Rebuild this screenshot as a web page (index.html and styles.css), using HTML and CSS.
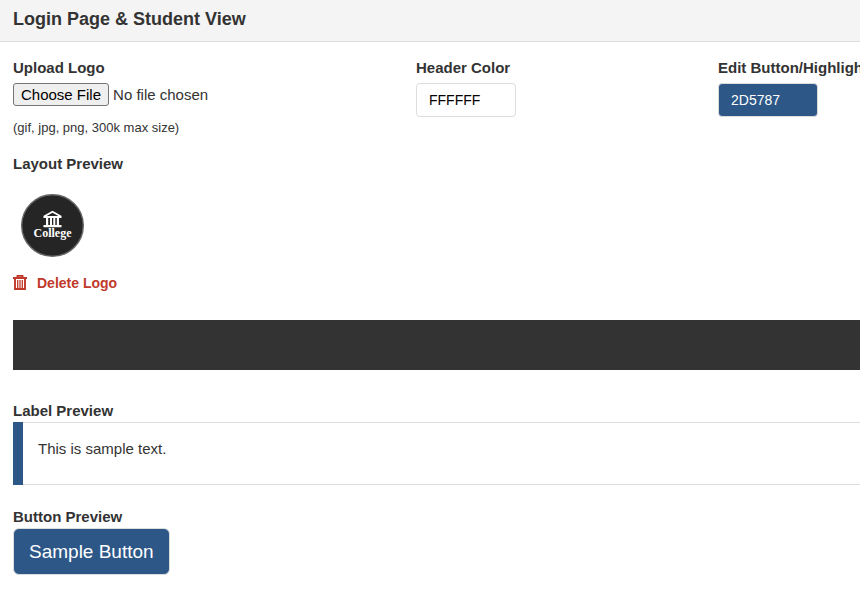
FILE: index.html
```html
<!DOCTYPE html>
<html lang="en">
<head>
<meta charset="utf-8">
<title>Login Page &amp; Student View</title>
<link rel="stylesheet" href="styles.css">
</head>
<body>
<header class="panel-heading">
  <h1 class="panel-title">Login Page &amp; Student View</h1>
</header>
<main class="panel-body">
  <form class="settings">
    <div class="field">
      <label class="label" for="logo">Upload Logo</label>
      <input class="file" type="file" id="logo" accept=".gif,.jpg,.png">
      <small class="hint">(gif, jpg, png, 300k max size)</small>
    </div>
    <div class="field">
      <label class="label" for="header-color">Header Color</label>
      <input class="color" type="text" id="header-color" value="FFFFFF">
    </div>
    <div class="field">
      <label class="label" for="button-color">Edit Button/Highlight</label>
      <input class="color color-accent" type="text" id="button-color" value="2D5787">
    </div>
  </form>

  <section class="layout-preview">
    <h2 class="label">Layout Preview</h2>
    <svg class="logo" viewBox="0 0 64 64" role="img" aria-label="College">
      <circle cx="31.500" cy="32.500" r="30.800" fill="#252525" stroke="#666" stroke-width="1.400"/>
      <path d="M23 23.500 31.500 18.800l8.500 4.700" fill="none" stroke="#fff" stroke-width="1.800"/>
      <path d="M22.500 23h18v2h-18zM25 25h2.200v7H25zM29 25h2v7h-2zM32.300 25h2v7h-2zM35.800 25H38v7h-2.200zM22.500 32h18v2.200h-18z" fill="#fff"/>
      <text class="logo-text" x="31.500" y="44" text-anchor="middle">College</text>
    </svg>
    <a class="delete" href="#">
      <svg class="trash" viewBox="0 0 14 16" aria-hidden="true">
        <path d="M0 3h14M4.500 3V.900h5V3M2 3.500v10.500h10V3.500" fill="none" stroke="#c0392b" stroke-width="1.900"/>
        <path d="M4.700 5v8M7 5v8M9.300 5v8" fill="none" stroke="#c0392b" stroke-width="1.300"/>
      </svg>
      Delete Logo
    </a>
    <div class="header-bar"></div>
  </section>

  <section class="label-preview">
    <h2 class="label">Label Preview</h2>
    <div class="callout">
      <p class="callout-text">This is sample text.</p>
    </div>
  </section>

  <section class="button-preview">
    <h2 class="label">Button Preview</h2>
    <button class="sample" type="button">Sample Button</button>
  </section>
</main>
</body>
</html>
```
FILE: styles.css
```css
* {
  box-sizing: border-box;
}

body {
  margin: 0;
  overflow-x: hidden;
  background: #fff;
  color: #333;
  font: 15px/20px "Liberation Sans", Arial, sans-serif;
}

h1, h2, p {
  margin: 0;
}

.panel-heading {
  padding: 9px 13px 12px;
  background: #f4f4f4;
  border-bottom: 1px solid #ddd;
}

.panel-title {
  font-size: 18px;
  line-height: 20px;
}

.panel-body {
  padding: 16px 0 16px 13px;
}

.settings {
  display: grid;
  grid-template-columns: 403fr 302fr 142fr;
}

.field {
  min-width: 0;
}

.label {
  display: block;
  font-size: 15px;
  font-weight: bold;
  line-height: 20px;
  white-space: nowrap;
}

.file {
  display: block;
  width: 100%;
  margin-top: 5px;
  color: #333;
  font: inherit;
  line-height: 17px;
}

.file::file-selector-button {
  height: 23px;
  margin: 0 4px 0 0;
  padding: 1px 7px;
  border: 1px solid #767676;
  border-radius: 3px;
  background: #efefef;
  color: #000;
  font: inherit;
}

.hint {
  display: block;
  margin-top: 12px;
  font-size: 13px;
  line-height: 20px;
}

.color {
  display: block;
  width: 100px;
  height: 34px;
  margin-top: 5px;
  padding: 6px 12px;
  border: 1px solid #ddd;
  border-radius: 4px;
  background: #fff;
  color: #000;
  font: 14px/20px "Liberation Sans", Arial, sans-serif;
}

.color-accent {
  background: #2d5787;
  color: #fff;
}

.layout-preview {
  margin-top: 16px;
}

.logo {
  display: block;
  width: 64px;
  height: 64px;
  margin: 19px 0 16px 8px;
}

.logo-text {
  fill: #fff;
  font: bold 12px "Liberation Serif", serif;
}

.delete {
  display: flex;
  align-items: center;
  gap: 10px;
  width: fit-content;
  color: #c0392b;
  font-size: 14px;
  font-weight: bold;
  text-decoration: none;
}

.trash {
  width: 14px;
  height: 16px;
}

.header-bar {
  height: 50px;
  margin-top: 27px;
  background: #333;
}

.label-preview {
  margin-top: 31px;
}

.callout {
  margin-top: 1px;
  border-left: 10px solid #2d5787;
}

.callout-text {
  min-height: 63px;
  padding: 16px 15px;
  border-top: 1px solid #ddd;
  border-bottom: 1px solid #ddd;
}

.button-preview {
  margin-top: 22px;
}

.sample {
  display: block;
  margin-top: 1px;
  padding: 10px 15px;
  border: 1px solid #ddd;
  border-radius: 6px;
  background: #2d5787;
  color: #fff;
  font: 19px/25px "Liberation Sans", Arial, sans-serif;
}
```
